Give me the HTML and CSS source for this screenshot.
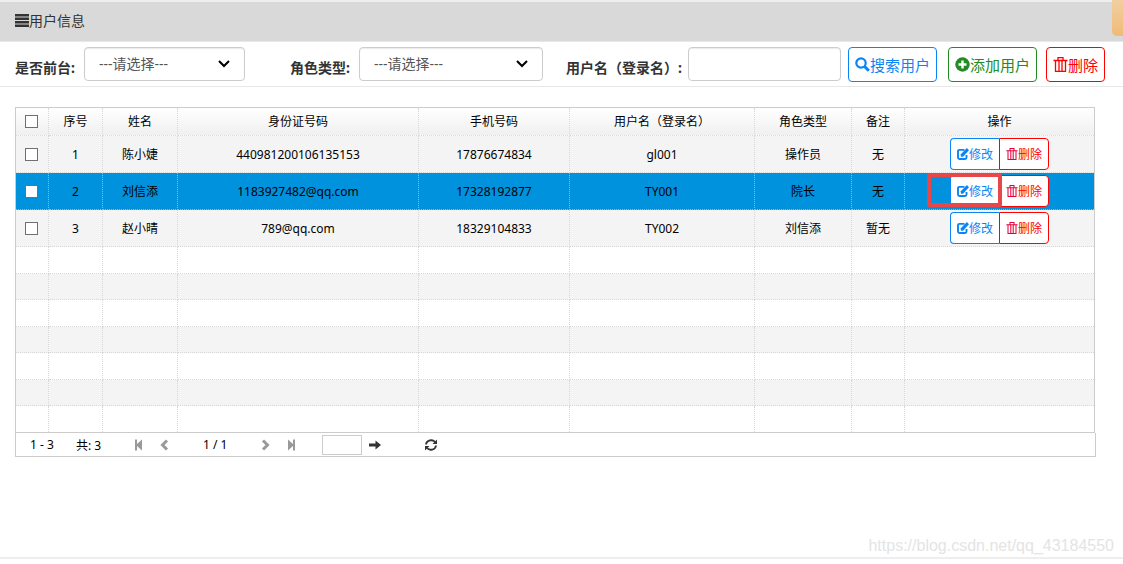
FILE: index.html
```
<!DOCTYPE html>
<html lang="zh-CN">
<head>
<meta charset="utf-8">
<title>用户信息</title>
<link rel="stylesheet" href="styles.css">
</head>
<body>
<svg class="sprite" aria-hidden="true">
  <symbol id="i-trash" viewBox="0 0 14 15"><path fill="none" stroke="currentColor" stroke-width="1.300" d="M0 3.500h14M4.500 3V.700h5V3M2 3.500v10.800h10V3.500M5.500 4v10M8.500 4v10"/></symbol>
  <symbol id="i-edit" viewBox="0 0 12 12"><path fill="none" stroke="currentColor" stroke-width="1.900" d="M7.500 1.900H2.500Q1 1.900 1 3.400v6.100Q1 11 2.500 11H8q1.500 0 1.500-1.500V7"/><path fill="currentColor" d="M3.800 8.800V6.200L9.900.100l2.100 2.100L6.100 8.800z"/></symbol>
  <symbol id="i-prev" viewBox="0 0 9 12"><path fill="none" stroke="currentColor" stroke-width="3" d="M7 1.500 2.500 6 7 10.500"/></symbol>
  <symbol id="i-first" viewBox="0 0 9 12"><path fill="currentColor" d="M1 .500h2V5l5-4.500v11L3 7v4.500H1z"/></symbol>
</svg>
<header class="title-bar">
  <svg class="list-icon" viewBox="0 0 14 13" aria-hidden="true"><path fill="currentColor" d="M0 0h14v2.500H0zM0 3.500h14V6H0zM0 7h14v2.500H0zM0 10.500h14V13H0z"/></svg>
  <h1 class="title">用户信息</h1>
  <span class="side-tab"></span>
</header>
<main class="main">
  <form class="search">
    <div class="field field-front">
      <label class="label" for="front">是否前台:</label>
      <span class="select-wrap">
        <select class="control" id="front"><option>---请选择---</option></select>
        <svg class="chevron" viewBox="0 0 12 8" aria-hidden="true"><path d="M1 1l5 5 5-5"/></svg>
      </span>
    </div>
    <div class="field field-role">
      <label class="label" for="role">角色类型:</label>
      <span class="select-wrap select-wide">
        <select class="control" id="role"><option>---请选择---</option></select>
        <svg class="chevron" viewBox="0 0 12 8" aria-hidden="true"><path d="M1 1l5 5 5-5"/></svg>
      </span>
    </div>
    <div class="field field-name">
      <label class="label" for="login">用户名（登录名）:</label>
      <input class="control control-name" id="login" type="text">
    </div>
    <div class="actions">
      <button class="btn btn-search" type="button"><svg class="icon" viewBox="0 0 15 15" aria-hidden="true"><g fill="none" stroke="currentColor"><circle cx="6" cy="6" r="4.700" stroke-width="2.200"/><path stroke-width="3" d="M9.300 9.300l4.500 4.500"/></g></svg>搜索用户</button>
      <button class="btn btn-add" type="button"><svg class="icon" viewBox="0 0 15 15" aria-hidden="true"><circle cx="7.500" cy="7.500" r="7.200" fill="currentColor"/><path stroke="#fff" stroke-width="2.400" d="M7.500 3.500v8M3.500 7.500h8"/></svg>添加用户</button>
      <button class="btn btn-delete" type="button"><svg class="icon" aria-hidden="true"><use href="#i-trash"/></svg>删除</button>
    </div>
  </form>
  <section class="grid">
    <table class="table">
      <colgroup><col class="c-check"><col class="c-no"><col class="c-person"><col class="c-id"><col class="c-phone"><col class="c-login"><col class="c-role"><col class="c-note"><col class="c-ops"></colgroup>
      <thead>
        <tr><th><input class="check" type="checkbox" aria-label="全选"></th><th>序号</th><th>姓名</th><th>身份证号码</th><th>手机号码</th><th>用户名（登录名）</th><th>角色类型</th><th>备注</th><th>操作</th></tr>
      </thead>
      <tbody class="data">
        <tr><td><input class="check" type="checkbox" aria-label="选择第1行"></td><td>1</td><td>陈小婕</td><td>440981200106135153</td><td>17876674834</td><td>gl001</td><td>操作员</td><td>无</td>
          <td><div class="ops"><button class="op op-edit" type="button"><svg class="op-icon" aria-hidden="true"><use href="#i-edit"/></svg>修改</button><button class="op op-delete" type="button"><svg class="op-icon" aria-hidden="true"><use href="#i-trash"/></svg>删除</button></div></td></tr>
        <tr class="selected"><td><input class="check" type="checkbox" aria-label="选择第2行"></td><td>2</td><td>刘信添</td><td>1183927482@qq.com</td><td>17328192877</td><td>TY001</td><td>院长</td><td>无</td>
          <td><div class="ops"><button class="op op-edit" type="button"><svg class="op-icon" aria-hidden="true"><use href="#i-edit"/></svg>修改</button><button class="op op-delete" type="button"><svg class="op-icon" aria-hidden="true"><use href="#i-trash"/></svg>删除</button><span class="marker"></span></div></td></tr>
        <tr><td><input class="check" type="checkbox" aria-label="选择第3行"></td><td>3</td><td>赵小晴</td><td>789@qq.com</td><td>18329104833</td><td>TY002</td><td>刘信添</td><td>暂无</td>
          <td><div class="ops"><button class="op op-edit" type="button"><svg class="op-icon" aria-hidden="true"><use href="#i-edit"/></svg>修改</button><button class="op op-delete" type="button"><svg class="op-icon" aria-hidden="true"><use href="#i-trash"/></svg>删除</button></div></td></tr>
      </tbody>
      <tbody class="blank">
        <tr><td></td><td></td><td></td><td></td><td></td><td></td><td></td><td></td><td></td></tr>
        <tr><td></td><td></td><td></td><td></td><td></td><td></td><td></td><td></td><td></td></tr>
        <tr><td></td><td></td><td></td><td></td><td></td><td></td><td></td><td></td><td></td></tr>
        <tr><td></td><td></td><td></td><td></td><td></td><td></td><td></td><td></td><td></td></tr>
        <tr><td></td><td></td><td></td><td></td><td></td><td></td><td></td><td></td><td></td></tr>
        <tr><td></td><td></td><td></td><td></td><td></td><td></td><td></td><td></td><td></td></tr>
        <tr><td></td><td></td><td></td><td></td><td></td><td></td><td></td><td></td><td></td></tr>
      </tbody>
    </table>
    <nav class="pager" aria-label="分页">
      <span class="range">1 - 3</span>
      <span class="total">共: 3</span>
      <div class="steps">
        <button class="step" type="button" aria-label="首页"><svg class="step-icon"><use href="#i-first"/></svg></button>
        <button class="step" type="button" aria-label="上一页"><svg class="step-icon"><use href="#i-prev"/></svg></button>
      </div>
      <span class="pages">1 / 1</span>
      <div class="steps">
        <button class="step" type="button" aria-label="下一页"><svg class="step-icon flip"><use href="#i-prev"/></svg></button>
        <button class="step" type="button" aria-label="末页"><svg class="step-icon flip"><use href="#i-first"/></svg></button>
      </div>
      <input class="goto" type="text" aria-label="页码">
      <button class="step go" type="button" aria-label="跳转"><svg class="go-icon" viewBox="0 0 12 10"><path fill="currentColor" d="M0 3.500h6.500V.500L12 5 6.500 9.500v-3H0z"/></svg></button>
      <button class="step refresh" type="button" aria-label="刷新"><svg class="refresh-icon" viewBox="0 0 12 12"><path fill="none" stroke="currentColor" stroke-width="1.800" d="M1 5.500C1.500 1 7.500 0 10 3M11 6.500C10.500 11 4.500 12 2 9"/><path fill="currentColor" d="M12 .500V5H7.500zM0 11.500V7h4.500z"/></svg></button>
    </nav>
  </section>
</main>
<footer class="footer"><span class="watermark">https://blog.csdn.net/qq_43184550</span></footer>
</body>
</html>
```

FILE: styles.css
```
* { box-sizing: border-box; }

body {
  display: flex;
  flex-direction: column;
  min-height: 100vh;
  margin: 0;
  background: #fff;
  color: #000;
  font-family: "Noto Sans", "Noto Sans CJK SC", sans-serif;
  font-size: 12px;
}

button, input, select { font-family: inherit; }

.sprite { position: absolute; width: 0; height: 0; }

.title-bar {
  position: relative;
  display: flex;
  align-items: center;
  height: 42px;
  padding: 0 0 2px 15px;
  border-top: 2px solid #eee;
  border-bottom: 1px solid #e8e8e8;
  background: #d9d9d9;
  color: #333;
}
.list-icon { width: 14px; height: 13px; }
.title { margin: 0; font-size: 14px; font-weight: 400; line-height: 20px; }
.side-tab {
  position: absolute;
  top: -2px;
  right: 0;
  width: 11px;
  height: 36px;
  border-radius: 0 0 0 5px;
  background: linear-gradient(#f2cfa0, #eebb78);
}

.main { flex: 1; }

.search {
  display: flex;
  align-items: flex-start;
  height: 45px;
  padding: 5px 18px 0 15px;
  border-bottom: 1px solid #e8e8e8;
}
.field { display: flex; align-items: flex-start; }
.field-front { flex: 0 0 275px; }
.field-role { flex: 0 0 276px; }
.field-name { flex: 1 0 275px; }
.label {
  padding-top: 11px;
  color: #333;
  font-size: 14px;
  font-weight: 700;
  line-height: 20px;
  white-space: nowrap;
}
.field-front .label, .field-role .label { flex: 0 0 69px; }
.field-name .label { flex: 0 0 122px; }
.select-wrap { position: relative; width: 161px; }
.select-wide { width: 184px; }
.control {
  width: 100%;
  height: 34px;
  padding: 0 14px 2px;
  border: 1px solid #ccc;
  border-radius: 4px;
  background: #fff;
  box-shadow: inset 0 1px 1px rgba(0, 0, 0, .08);
  color: #555;
  font-size: 14px;
  appearance: none;
}
.control-name { flex: 1; width: 0; }
.chevron {
  position: absolute;
  top: 13px;
  right: 15px;
  width: 12px;
  height: 8px;
  fill: none;
  stroke: #000;
  stroke-width: 2;
  pointer-events: none;
}

.actions { display: flex; margin-left: 7px; }
.btn {
  display: flex;
  align-items: center;
  justify-content: center;
  width: 89px;
  height: 35px;
  padding: 0;
  border: 1px solid currentColor;
  border-radius: 4px;
  background: #fff;
  font-size: 15px;
  white-space: nowrap;
}
.btn-search { color: #0a85f5; }
.btn-add { margin-left: 11px; color: #228b22; }
.btn-delete { width: 59px; margin-left: 9px; color: #f00; }
.icon { width: 15px; height: 15px; }

.grid { margin: 20px 28px 0 15px; }
.table {
  width: 100%;
  border: 1px solid #ccc;
  border-spacing: 0;
  table-layout: fixed;
}
.c-check { width: 33px; }
.c-no { width: 54px; }
.c-person { width: 75px; }
.c-id { width: 241px; }
.c-phone { width: 151px; }
.c-login { width: 185px; }
.c-role { width: 97px; }
.c-note { width: 53px; }
.c-ops { width: 189px; }

th, td {
  height: 37px;
  padding: 0;
  border-right: 1px dotted #d8d8d8;
  border-bottom: 1px dotted #d8d8d8;
  font-weight: 400;
  line-height: 18px;
  text-align: center;
}
th:last-child, td:last-child { border-right: 0; }
thead th { height: 28px; background: linear-gradient(#fff, #f0f0f0); }
.data tr { background: #f4f4f4; }
.data .selected { background: #0092dc; }
.data td { padding-top: 2px; }
.data td:first-child, .data td:last-child { padding-top: 0; }
.data .selected td { border-color: #7cc0e6; }
th:first-child, td:first-child { padding-right: 2px; }
.blank td { height: 26px; }
.blank tr:nth-child(odd) td { height: 27px; }
.blank tr:nth-child(even) { background: #f4f4f4; }
.blank tr:last-child td { height: 26px; border-bottom: 0; }

.check {
  display: block;
  width: 13px;
  height: 13px;
  margin: 0 auto;
  border: 1px solid #707070;
  background: #fff;
  appearance: none;
}
.check:checked { background: #0a85f5; }

.ops {
  position: relative;
  display: flex;
  width: 99px;
  margin: 0 auto;
}
.op {
  display: flex;
  align-items: center;
  justify-content: center;
  width: 50px;
  height: 32px;
  padding: 0;
  border: 1px solid currentColor;
  background: #fff;
  font-size: 12px;
  white-space: nowrap;
}
.op-edit { border-right: 0; border-radius: 4px 0 0 4px; color: #0a85f5; width: 49px; }
.op-delete { border-radius: 0 4px 4px 0; color: #f00; }
.op-icon { width: 12px; height: 12px; }
.op-delete .op-icon { color: #e6003c; }
.marker {
  position: absolute;
  top: -2px;
  left: -23px;
  width: 75px;
  height: 34px;
  border: 4px solid #e8474a;
  border-radius: 2px;
  pointer-events: none;
}

.pager {
  display: flex;
  align-items: center;
  height: 24px;
  margin-right: -1px;
  padding-left: 14px;
  border: 1px solid #ccc;
  border-top: 0;
}
.range { width: 46px; }
.total { width: 50px; }
.steps { display: flex; width: 77px; }
.pages { width: 50px; }
.step {
  display: flex;
  width: 26px;
  padding: 0 0 0 8px;
  border: 0;
  background: none;
  color: #999;
}
.step-icon { width: 9px; height: 12px; }
.flip { transform: scaleX(-1); }
.goto { width: 40px; height: 20px; margin-left: -8px; padding: 0 4px; border: 1px solid #ccc; }
.go { width: 56px; padding-left: 7px; color: #333; }
.go-icon { width: 12px; height: 10px; }
.refresh { padding-left: 7px; color: #333; }
.refresh-icon { width: 12px; height: 12px; }

.footer {
  position: relative;
  height: 7px;
  border-top: 2px solid #eee;
}
.watermark {
  position: absolute;
  right: 9px;
  bottom: 9px;
  color: #e4e4e4;
  font-family: "Liberation Sans", sans-serif;
  font-size: 16px;
  line-height: 18px;
}
```
